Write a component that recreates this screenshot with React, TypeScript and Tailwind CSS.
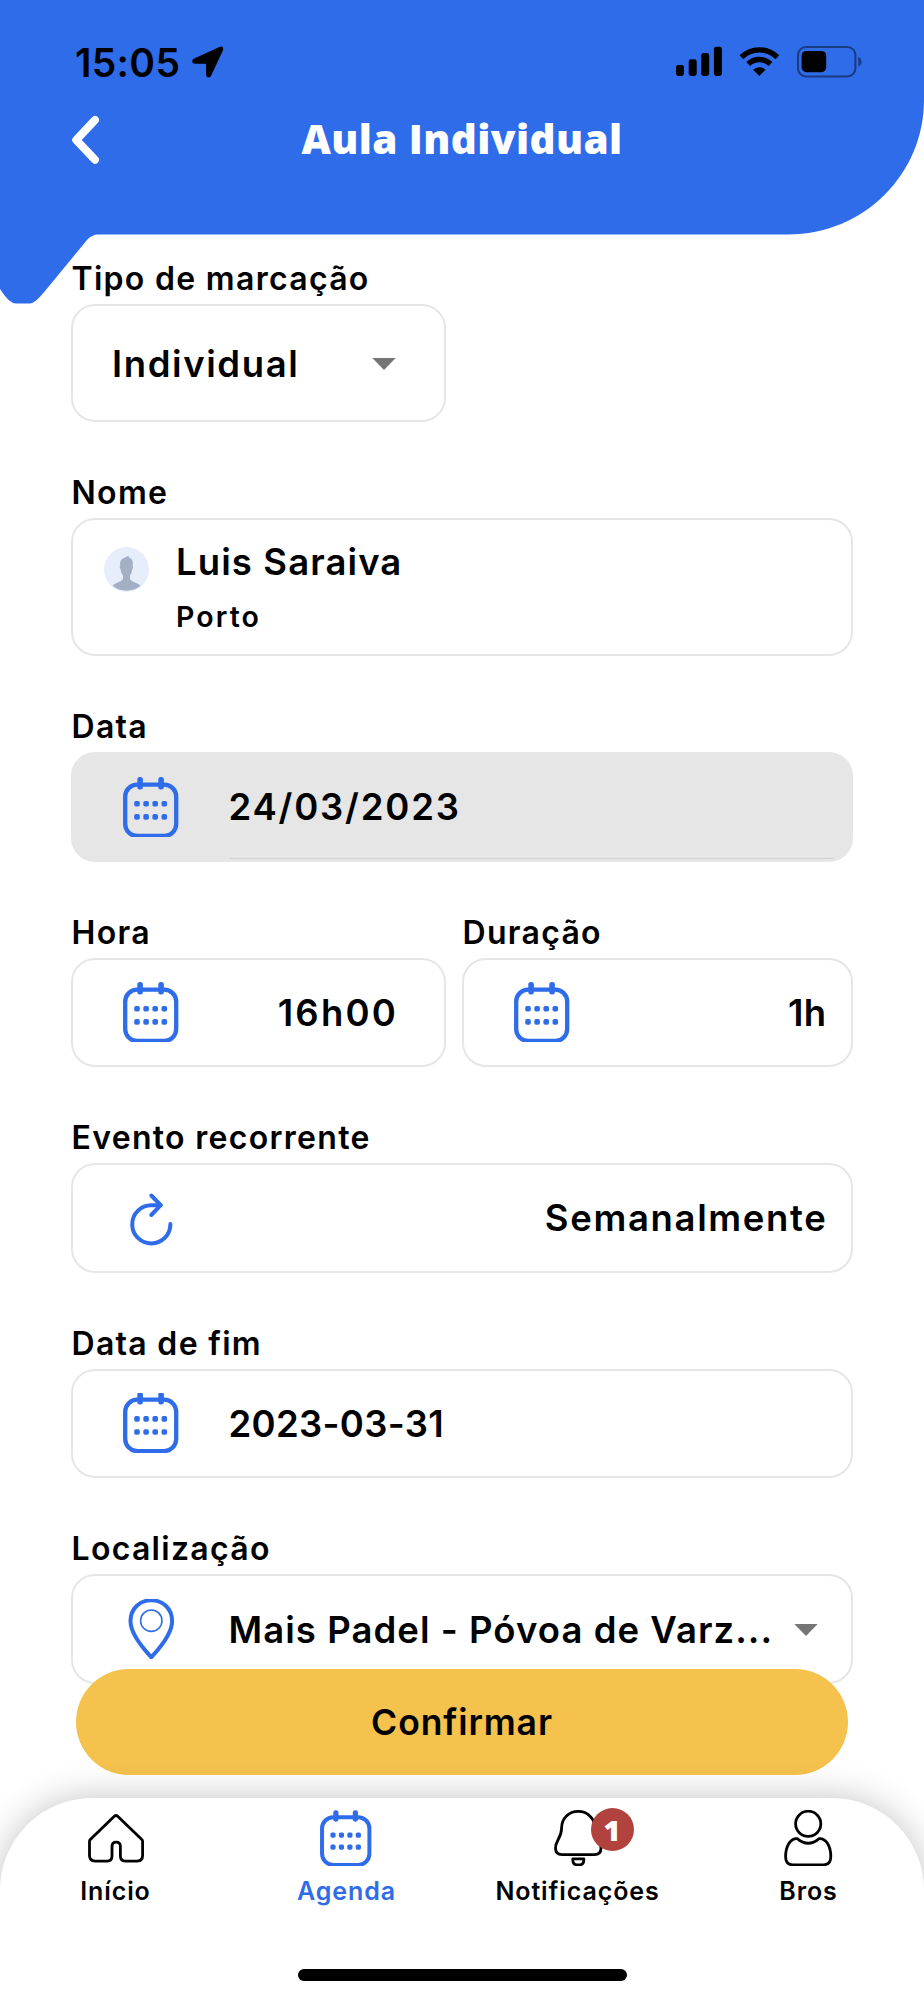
import React from 'react';

const BLUE = '#2f6cea';

type IconProps = { className?: string };

const CalendarIcon: React.FC<IconProps & { shift?: number }> = ({ className = 'w-[56px] h-[60px]', shift = 0 }) => (
  <svg viewBox={`0 ${shift} 56 60`} className={`shrink-0 ${className}`} fill={BLUE}>
    <rect x="2.2" y="7.6" width="51" height="51.4" rx="12" fill="none" stroke={BLUE} strokeWidth="4.3" />
    <rect x="14.3" y="0" width="5.6" height="12.4" rx="2.5" />
    <rect x="35.3" y="0" width="5.6" height="12.4" rx="2.5" />
    {[26.8, 39.9].map(y =>
      [14, 23.1, 32.2, 41.3].map(x => (
        <rect key={`${x}-${y}`} x={x - 2.8} y={y - 2.8} width="5.6" height="5.6" rx="1.8" />
      ))
    )}
  </svg>
);

const RepeatIcon: React.FC = () => (
  <svg viewBox="-0.8 0.8 56 60" className="w-[56px] h-[60px] shrink-0" fill="none" stroke={BLUE} strokeWidth="4" strokeLinecap="round" strokeLinejoin="round">
    <path d="M46.6 36.8A19.1 19.1 0 1 1 27.5 18H36.8" />
    <path d="M27.5 8.3L36.9 18L27.5 27.8" />
  </svg>
);

const PinIcon: React.FC = () => (
  <svg viewBox="-0.8 0 56 60" className="w-[56px] h-[60px] shrink-0" fill="none" stroke={BLUE}>
    <path d="M27.5 58.2C24 54 6.7 37.5 6.7 22C6.7 9.5 16 1.3 27.5 1.3S48.3 9.5 48.3 22C48.3 37.5 31 54 27.5 58.2Z" strokeWidth="4" strokeLinejoin="round" />
    <circle cx="27.5" cy="21.7" r="10.7" strokeWidth="1.6" />
  </svg>
);

const Caret: React.FC<IconProps> = ({ className = '' }) => (
  <svg viewBox="0 0 24 12" className={`w-[24px] h-[12px] shrink-0 ${className}`} fill="#757575">
    <path d="M0.3 0H23.7L12 12Z" />
  </svg>
);

const Avatar: React.FC = () => (
  <svg viewBox="0 0 45 45" className="w-[45px] h-[45px] shrink-0">
    <circle cx="22.5" cy="22.5" r="22.5" fill="#e6eefc" />
    <path
      d="M8.5 38.8C11 35.5 18.3 35.3 19 31.5V28.6C17.4 26.6 17 24.8 16.7 22.5C15.7 21.5 15.4 19.5 16.2 18.8C15.5 14 17.6 11.6 20.8 10.8C22 9.6 23.3 9.2 25.6 9C24.8 9.6 24.6 10 24.8 10.6C28.2 11.6 29.5 14.5 28.6 18.8C29.4 19.5 29.2 21.5 28.2 22.5C28 24.8 27.4 26.6 26 28.6V31.5C26.8 35.3 34 35.5 36.6 38.8A22.5 22.5 0 0 1 8.5 38.8Z"
      fill="#a3b0c4"
    />
  </svg>
);

const HomeIcon: React.FC = () => (
  <svg viewBox="0 0 56 56" className="w-[56px] h-[56px]" fill="none" stroke="black" strokeWidth="2.8" strokeLinejoin="round">
    <path d="M26.6 6.1Q28 4.9 29.4 6.1L53.8 29.5Q54.6 30.3 54.6 31.5V45.6Q54.6 51.1 49 51.1H37.5Q32.4 51.1 32.4 46V36.5Q32.4 32.2 28.2 32.2T24 36.5V46Q24 51.1 19 51.1H7Q1.5 51.1 1.5 45.6V31.5Q1.5 30.3 2.3 29.5Z" />
  </svg>
);

const BellIcon: React.FC = () => (
  <svg viewBox="0 0 56 56" className="w-[56px] h-[56px]" fill="none" stroke="black" strokeWidth="2.8" strokeLinejoin="round">
    <path d="M28.2 1.4C18.5 1.4 11.6 8.6 11.6 18C11.6 28 5.5 30.5 5.5 38Q5.5 44.6 12 44.6H44.5Q51 44.6 51 38C51 30.5 44.8 28 44.8 18C44.8 8.6 37.9 1.4 28.2 1.4Z" />
    <path d="M22.8 48.8H33.8V50Q33.8 54.8 29.5 54.8H27.1Q22.8 54.8 22.8 50Z" />
  </svg>
);

const PersonIcon: React.FC = () => (
  <svg viewBox="1 0 56 56" className="w-[56px] h-[56px]" fill="none" stroke="black" strokeWidth="2.8" strokeLinejoin="round">
    <circle cx="28.2" cy="13.8" r="12.6" />
    <path d="M17.3 28.6Q28.2 38 39.1 28.6C46.5 28 50.8 37 50.8 46.5Q50.8 54.8 43.5 54.8H12.9Q5.6 54.8 5.6 46.5C5.6 37 10 28 17.3 28.6Z" />
  </svg>
);

const StatusIcons: React.FC = () => (
  <svg viewBox="0 0 188 32" className="w-[188px] h-[32px]">
    <rect x="2" y="19" width="8" height="11" rx="2.4" />
    <rect x="14.7" y="13.3" width="8" height="16.7" rx="2.4" />
    <rect x="27.2" y="7" width="8" height="23" rx="2.4" />
    <rect x="39.9" y="0.8" width="8" height="29.2" rx="2.4" />
    <g fill="none" stroke="black" strokeWidth="5.4">
      <path d="M67.4 11.2A25.6 25.6 0 0 1 103.3 11.2" />
      <path d="M74.2 18A16 16 0 0 1 96.5 18" />
    </g>
    <path d="M85.3 30L79.2 23.8A8.8 8.8 0 0 1 91.5 23.8Z" />
    <rect x="124" y="1" width="57.4" height="29.4" rx="8" fill="none" stroke="black" strokeOpacity="0.45" strokeWidth="2" />
    <rect x="127.6" y="4.9" width="24.6" height="21.3" rx="4.8" />
    <path d="M184.3 11Q187.6 12.5 187.6 15.7T184.3 20.5Z" fillOpacity="0.45" />
  </svg>
);

const Header: React.FC = () => (
  <header className="relative h-[234px] shrink-0">
    <svg viewBox="0 0 924 304" className="absolute left-0 top-0 w-[924px] h-[304px]" fill={BLUE}>
      <path d="M0 0H924V100C924 174 864 234.5 788 234.5H98Q92 234.5 87 240L45 291Q35 303.5 30 303.5H16Q9 303.5 0 289Z" />
    </svg>
    <div className="relative flex items-center justify-between h-[62px] mt-[31px] pl-[75px] pr-[62px]">
      <div className="flex items-center">
        <span className="w-[117px] text-[39px] leading-none tracking-[0.3px] whitespace-nowrap">15:05</span>
        <svg viewBox="0 0 32 32" className="w-[32px] h-[32px]">
          <path d="M2.2 12.6L28 0.8Q32 -0.2 31 4.2L19.2 29.5Q18 31.8 15.8 31.3Q14.1 30.8 14.1 28.8V17.8H3Q0.5 17.6 0.2 15.7Q0 13.6 2.2 12.6Z" />
        </svg>
      </div>
      <StatusIcons />
    </div>
    <div className="relative flex items-center h-[94px] px-[68px]">
      <button className="w-[36px]">
        <svg viewBox="0 0 36 56" className="w-[36px] h-[56px]" fill="none" stroke="white" strokeWidth="8" strokeLinecap="round" strokeLinejoin="round">
          <path d="M27 8L8.2 28L27 47.8" />
        </svg>
      </button>
      <h1 className="flex-1 pb-[2px] text-center font-['Open_Sans'] font-extrabold text-[40.5px] leading-none tracking-[0.4px] text-white">Aula Individual</h1>
      <div className="w-[36px]" />
    </div>
  </header>
);

const Field: React.FC<{ label: string; box?: string; className?: string; children: React.ReactNode }> = ({
  label,
  box = 'h-[109.5px] pl-[50px] border-[#e6e6e6]',
  className = '',
  children
}) => (
  <div className={className}>
    <label className="block pt-[1px] pl-[0.5px] mb-[5px] text-[32px] leading-[40px] tracking-[1.3px] whitespace-nowrap">{label}</label>
    <div className={`flex items-center rounded-[24px] border-2 text-[36.5px] leading-none whitespace-nowrap ${box}`}>
      {children}
    </div>
  </div>
);

const navItems = [
  { label: 'Início', icon: <HomeIcon />, badge: 0 },
  { label: 'Agenda', icon: <CalendarIcon className="w-[52px] h-[56px] -ml-[2px]" />, badge: 0, active: true },
  { label: 'Notificações', icon: <BellIcon />, badge: 1 },
  { label: 'Bros', icon: <PersonIcon />, badge: 0 }
];

const BottomNav: React.FC = () => (
  <nav className="h-[202px] pt-[12px] flex flex-col rounded-t-[92px] bg-white shadow-[0_0_36px_rgba(0,0,0,0.24)]">
    <div className="grid grid-cols-4">
      {navItems.map(item => (
        <div key={item.label} className={`flex flex-col items-center ${item.active ? 'text-[#2f6cea]' : 'text-black'}`}>
          <div className="relative h-[56px]">
            {item.icon}
            {item.badge > 0 && (
              <span className="absolute left-[41px] top-[-2px] w-[43px] h-[43px] rounded-full bg-[#b2423d] flex items-center justify-center font-['Open_Sans'] font-extrabold text-[29px] leading-none text-white">
                {item.badge}
              </span>
            )}
          </div>
          <span className="mt-[9px] text-[25px] leading-[32px] tracking-[0.9px]">{item.label}</span>
        </div>
      ))}
    </div>
    <div className="mt-auto mb-[19px] mx-auto w-[329px] h-[12px] rounded-full bg-black" />
  </nav>
);

export default function App() {
  return (
    <div className="relative w-[924px] h-[2000px] overflow-hidden flex flex-col bg-white text-black font-['Inter','Liberation_Sans',sans-serif] font-semibold">
      <Header />
      <main className="relative pt-[24px] pl-[71px] pr-[71.5px] flex flex-col gap-[50px]">
        <Field label="Tipo de marcação" className="w-[375px]" box="h-[118px] pl-[39px] pr-[48px] justify-between border-[#e6e6e6]">
          <span className="pt-[2px] tracking-[1.6px]">Individual</span>
          <Caret className="mt-[2px]" />
        </Field>
        <Field label="Nome" box="h-[138px] pl-[31px] border-[#e6e6e6]">
          <div className="flex gap-[27px]">
            <div className="pt-[7px]">
              <Avatar />
            </div>
            <div>
              <div className="leading-[44px] tracking-[1.1px]">Luis Saraiva</div>
              <div className="mt-[15px] text-[28.5px] leading-[36px] tracking-[2.1px]">Porto</div>
            </div>
          </div>
        </Field>
        <Field label="Data" box="h-[109.5px] pl-[50px] pr-[17px] border-[#e6e6e6] bg-[#e6e6e6]">
          <CalendarIcon />
          <div className="ml-[49.5px] flex-1 self-stretch flex items-center border-b border-[#cfcfcf] pt-[3px] mb-[1px] tracking-[1.8px]">24/03/2023</div>
        </Field>
        <div className="flex gap-[16px]">
          <Field label="Hora" className="w-[375px]" box="h-[109.5px] pl-[50px] pr-[46px] justify-between border-[#e6e6e6]">
            <CalendarIcon />
            <span className="pt-[2px] tracking-[2.2px]">16h00</span>
          </Field>
          <Field label="Duração" className="flex-1" box="h-[109.5px] pl-[50px] pr-[24px] justify-between border-[#e6e6e6]">
            <CalendarIcon />
            <span className="pt-[2px] tracking-[0.4px]">1h</span>
          </Field>
        </div>
        <Field label="Evento recorrente" box="h-[109.5px] pl-[50px] pr-[23px] justify-between border-[#e6e6e6]">
          <RepeatIcon />
          <span className="pt-[1px] tracking-[1.65px]">Semanalmente</span>
        </Field>
        <Field label="Data de fim">
          <CalendarIcon shift={0.9} />
          <span className="ml-[49.5px] pt-[2px] tracking-[0.3px]">2023-03-31</span>
        </Field>
        <Field label="Localização" box="h-[109.5px] pl-[50px] pr-[33px] border-[#e6e6e6]">
          <PinIcon />
          <span className="ml-[49.5px] flex-1 pt-[2px] tracking-[1.05px]">Mais Padel - Póvoa de Varz...</span>
          <Caret className="mt-[2px]" />
        </Field>
      </main>
      <div className="absolute inset-x-0 bottom-0">
        <button className="block w-[772px] h-[106px] mx-auto mb-[23px] pt-[2px] rounded-full bg-[#f4c24d] text-[35.5px] leading-none tracking-[0.9px]">
          Confirmar
        </button>
        <BottomNav />
      </div>
    </div>
  );
}
